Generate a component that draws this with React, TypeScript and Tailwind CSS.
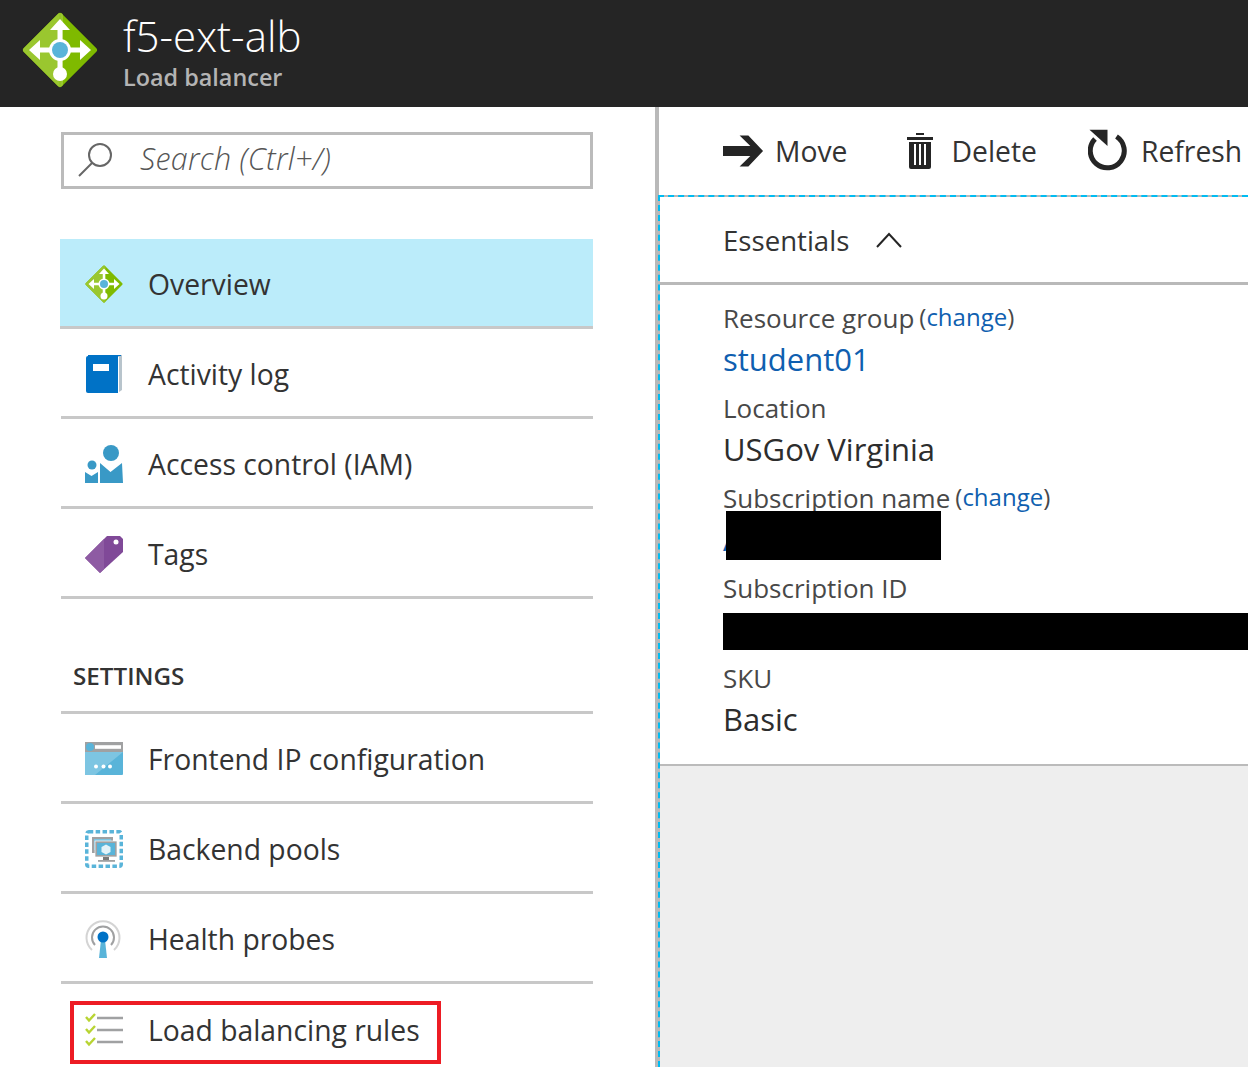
import { ReactNode } from "react";

function LbIcon({ size }: { size: number }) {
  return (
    <svg width={size} height={size} viewBox="0 0 76 76">
      <path d="M38 4 L72 38 L38 72 L4 38 Z" fill="#7fba00" stroke="#7fba00" strokeWidth="6" strokeLinejoin="round" />
      <path d="M38 4 L4 38 L38 72 Z" fill="#9ac72f" stroke="#9ac72f" strokeWidth="6" strokeLinejoin="round" />
      <path d="M38 1 L38 75" stroke="#8cc01a" strokeWidth="1" />
      <path d="M38 38 L38 64 M38 38 L38 18 M38 38 L18 38 M38 38 L58 38" stroke="#fff" strokeWidth="5" />
      <path d="M38 7 L48 18 L28 18 Z M7 38 L18 28 L18 48 Z M69 38 L58 28 L58 48 Z" fill="#fff" />
      <circle cx="38" cy="62" r="7" fill="#fff" />
      <circle cx="38" cy="38" r="11" fill="#fff" />
      <circle cx="38" cy="38" r="8" fill="#59b4d9" />
    </svg>
  );
}

function BookIcon() {
  return (
    <svg width="38" height="40" viewBox="0 0 38 40">
      <path d="M3 1 L37 1 L37 36 L34 38 L34 3 L3 3 Z" fill="#b8c4cc" />
      <path d="M3 1 L36 1 L36 2 L3 2 Z" fill="#0072c6" />
      <path d="M1 4 Q1 2 3 2 L33 2 L33 39 L3 39 Q1 39 1 37 Z" fill="#0072c6" />
      <rect x="8" y="10" width="16" height="7" fill="#fff" />
    </svg>
  );
}

function IamIcon() {
  return (
    <svg width="38" height="38" viewBox="0 0 38 38">
      <circle cx="26" cy="8" r="8" fill="#3999c6" />
      <path d="M15 18 L25.5 27 L37 18 L38 38 L15 38 Z" fill="#3999c6" />
      <circle cx="7" cy="20" r="4.5" fill="#3999c6" />
      <path d="M0 27 L6.5 31 L13 27 L13 38 L0 38 Z" fill="#3999c6" />
    </svg>
  );
}

function TagIcon() {
  return (
    <svg width="38" height="38" viewBox="0 0 38 38">
      <path d="M0 23 L22 1 L35 1 L38 4 L38 17 L15 38 Z" fill="#804998" />
      <path d="M0 23 L19 4 L19 34 L15 38 Z" fill="#8e5ba3" />
      <circle cx="31" cy="7" r="2.5" fill="#fff" />
    </svg>
  );
}

function FrontendIcon() {
  return (
    <svg width="38" height="33" viewBox="0 0 38 33">
      <rect width="38" height="33" rx="1" fill="#59b4d9" />
      <path d="M0 10 L38 10 L10 33 L0 33 Z" fill="#7dc5e2" />
      <rect width="38" height="10" fill="#a0a1a2" />
      <circle cx="5" cy="5" r="4" fill="#59b4d9" />
      <rect x="10" y="3.2" width="26" height="3.6" fill="#fff" />
      <circle cx="11" cy="24.5" r="2" fill="#fff" />
      <circle cx="18.5" cy="24.5" r="2" fill="#fff" />
      <circle cx="25" cy="24.5" r="2" fill="#fff" />
    </svg>
  );
}

function BackendIcon() {
  return (
    <svg width="38" height="38" viewBox="0 0 38 38">
      <rect x="1.75" y="1.75" width="34.5" height="34.5" rx="2" fill="none" stroke="#59b4d9" strokeWidth="3.5" strokeDasharray="4.5 2.4" />
      <rect x="7" y="7" width="21" height="16" fill="#a0a1a2" />
      <rect x="9" y="9" width="17" height="11" fill="#7dc5e2" />
      <rect x="10" y="11" width="22" height="16" fill="#a0a1a2" stroke="#fff" strokeWidth="0.7" />
      <rect x="12" y="13" width="18" height="12" fill="#59b4d9" />
      <path d="M21 14.5 L25.5 17 L25.5 22 L21 24.5 L16.5 22 L16.5 17 Z" fill="#e3f3f9" />
      <rect x="18" y="27" width="6" height="3.2" fill="#7a7a7a" />
      <rect x="13" y="30" width="17" height="1.8" fill="#a0a1a2" />
    </svg>
  );
}

function ProbeIcon() {
  return (
    <svg width="36" height="38" viewBox="0 0 36 38">
      <path d="M7 30 A16.5 16.5 0 1 1 29 30" fill="none" stroke="#d4d4d4" strokeWidth="2" />
      <path d="M10 25 A11 11 0 1 1 26 25" fill="none" stroke="#a0a1a2" strokeWidth="2" />
      <path d="M16 20 L20 20 L22 38 L14 38 Z" fill="#59b4d9" />
      <circle cx="18" cy="17" r="5.5" fill="#0072c6" />
    </svg>
  );
}

function RulesIcon() {
  return (
    <svg width="38" height="34" viewBox="0 0 38 34">
      <path d="M1 4 L4 7.5 L10 1 M1 16 L4 19.5 L10 13 M1 28 L4 31.5 L10 25" fill="none" stroke="#b8d432" strokeWidth="2.4" />
      <path d="M12 5 L38 5 M12 17 L38 17 M12 29 L38 29" stroke="#a0a1a2" strokeWidth="2.6" />
    </svg>
  );
}

function NavRow({ icon, label, active, last }: { icon: ReactNode; label: string; active?: boolean; last?: boolean }) {
  return (
    <div className={`h-[90px] pt-[2px] flex items-center ${last ? "" : "border-b-[3px] border-[#c8c8c8]"} ${active ? "bg-[#bbecfa] pl-px" : "ml-px"}`}>
      <div className="w-[87px] pl-[24px] flex justify-start">{icon}</div>
      <span className={`text-[28.3px] leading-none text-[#333] ${last ? "" : "mt-[2px]"}`}>{label}</span>
    </div>
  );
}

function Field({ label, value, change, blue }: { label: string; value: string; change?: boolean; blue?: boolean }) {
  return (
    <div className="h-[90px]">
      <div className="h-[40px] flex items-center text-[26px] text-[#484848]">
        {label}
        {change && (
          <span className="ml-[5px] -mt-[3px] text-[24px]">
            (<span className="text-[#0f5fb0]">change</span>)
          </span>
        )}
      </div>
      <div className={`h-[42px] flex items-center text-[31px] ${blue ? "text-[#0f5fb0]" : "text-[#2d2d2d]"}`}>{value}</div>
    </div>
  );
}

export default function App() {
  return (
    <div className="relative w-[1248px] h-[1067px] overflow-hidden bg-white font-['Open_Sans',sans-serif]">
      {/* Title bar */}
      <header className="h-[107px] bg-[#252525] flex pl-[22px]">
        <div className="pt-[12px]">
          <LbIcon size={76} />
        </div>
        <div className="ml-[25px]">
          <div className="mt-[10px] h-[52px] text-[42px] leading-[52px] font-light text-white">f5-ext-alb</div>
          <div className="h-[30px] text-[23.4px] leading-[30px] font-semibold text-[#b4b4b4]">Load balancer</div>
        </div>
      </header>

      <div className="flex h-[960px]">
        {/* Left menu */}
        <aside className="w-[659px] shrink-0 border-r-4 border-[#b9b9b9] pl-[60px] pr-[62px] pt-[25px]">
          <div className="ml-px h-[57px] border-[3px] border-[#bbb] flex items-center">
            <svg width="38" height="38" viewBox="0 0 38 38" className="ml-[13px] -mt-[2px]" fill="none" stroke="#666" strokeWidth="2">
              <circle cx="23" cy="14" r="11" />
              <path d="M15 22 L2 35" />
            </svg>
            <span className="ml-[25px] -mt-[3px] text-[30.4px] tracking-[0.3px] italic font-light text-[#555]">Search (Ctrl+/)</span>
          </div>

          <div className="mt-[50px]">
            <NavRow active icon={<LbIcon size={38} />} label="Overview" />
            <NavRow icon={<BookIcon />} label="Activity log" />
            <NavRow icon={<IamIcon />} label="Access control (IAM)" />
            <NavRow icon={<TagIcon />} label="Tags" />
          </div>

          <div className="ml-px h-[115px] border-b-[3px] border-[#c8c8c8] pl-[12px] pt-[61px] text-[24.2px] leading-[32px] font-semibold text-[#333]">
            SETTINGS
          </div>

          <NavRow icon={<FrontendIcon />} label="Frontend IP configuration" />
          <NavRow icon={<BackendIcon />} label="Backend pools" />
          <NavRow icon={<ProbeIcon />} label="Health probes" />
          <NavRow last icon={<RulesIcon />} label="Load balancing rules" />
        </aside>

        {/* Right blade */}
        <main className="flex-1 min-w-0">
          <div className="h-[88px] flex items-center pl-[64px] text-[28.3px] text-[#333]">
            <svg width="41" height="32" viewBox="0 0 42 32" fill="#252525">
              <path d="M0 11 L28 11 L17 0 L26 0 L41 16 L26 32 L17 32 L28 21 L0 21 Z" />
            </svg>
            <span className="ml-[11px] mt-[1px]">Move</span>
            <svg width="26" height="36" viewBox="0 0 26 36" fill="#252525" className="ml-[59px]">
              <path d="M9 0 H17 V2 H9 Z M0 4 H26 V7 H0 Z M2 9 H24 V34 Q24 36 22 36 H4 Q2 36 2 34 Z" />
              <path d="M7 11 H9 V32 H7 Z M12 11 H14 V32 H12 Z M17 11 H19 V32 H17 Z" fill="#fff" />
            </svg>
            <span className="ml-[19px] mt-[1px]">Delete</span>
            <svg width="40" height="42" viewBox="0 0 40 42" fill="none" className="ml-[51px] -mt-[2px]">
              <path d="M28.5 7.5 A17 17 0 1 1 7 10" stroke="#252525" strokeWidth="5" />
              <path d="M1.5 0.7 H19.5 V17 Z" fill="#252525" />
            </svg>
            <span className="ml-[13px] mt-[1px]">Refresh</span>
          </div>

          <div className="h-[872px] -ml-px border-t-2 border-l-2 border-dashed border-[#00bcf2] bg-[#b9b9b9] flex flex-col">
            <div className="h-[85px] shrink-0 bg-white flex items-center pl-[63px] text-[27.6px] text-[#333]">
              <span className="mt-[3px]">Essentials</span>
              <svg width="26" height="16" viewBox="0 0 26 16" fill="none" stroke="#252525" strokeWidth="2" className="ml-[27px]">
                <path d="M1 15 L13 2 L25 15" />
              </svg>
            </div>
            <div className="mt-[3px] h-[481px] shrink-0 bg-white pl-[63px] pt-[13px] border-b-2 border-[#bbb]">
              <Field label="Resource group" value="student01" change blue />
              <Field label="Location" value="USGov Virginia" />
              <Field label="Subscription name" value="A" change blue />
              <Field label="Subscription ID" value="" />
              <Field label="SKU" value="Basic" />
            </div>
            <div className="flex-1 bg-[#eeeeee]" />
          </div>
        </main>
      </div>

      {/* Redaction bars and callout drawn over the capture */}
      <div className="absolute left-[726px] top-[511px] w-[215px] h-[49px] bg-black" />
      <div className="absolute left-[723px] top-[613px] w-[525px] h-[37px] bg-black" />
      <div className="absolute left-[70px] top-[1001px] w-[371px] h-[63px] border-4 border-[#ed1c24]" />
    </div>
  );
}
